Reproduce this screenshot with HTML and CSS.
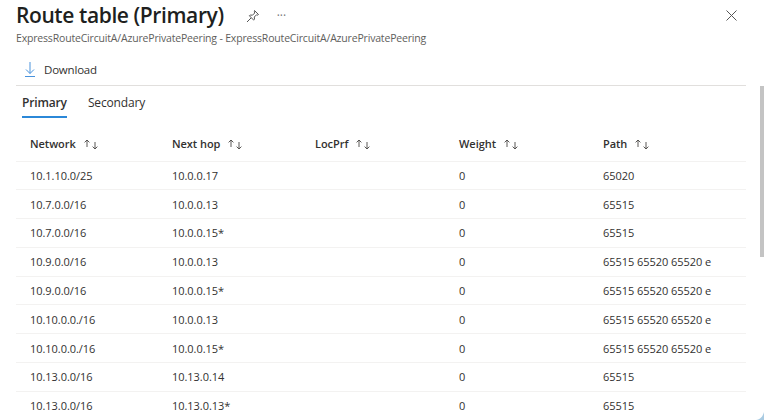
FILE: index.html
```html
<!DOCTYPE html>
<html lang="en">
<head>
<meta charset="utf-8">
<title>Route table (Primary)</title>
<link rel="stylesheet" href="styles.css">
</head>
<body>
<svg class="defs" width="0" height="0"><defs><g id="sort" fill="none" stroke="#484644" stroke-width=".9"><path d="M3 8V1M.6 3.400 3 1l2.400 2.400M11 3v7M8.600 7.600 11 10l2.400-2.400"/></g></defs></svg>
<div class="panel">
  <header class="head">
    <div class="title-row">
      <h1 class="title">Route table (Primary)</h1>
      <svg class="pin" width="14" height="14" viewBox="0 0 14 14" fill="none" stroke="#555" stroke-width="1"><path d="M1 13 5 9M8.500 1.500l4 4-.8.600-1.200-.3-2.200 2.200.2 2.300-.8.800L3.400 6.800l.8-.8 2.300.2 2.200-2.200-.3-1.200z"/></svg>
      <span class="more">···</span>
      <svg class="close" width="11" height="11" viewBox="0 0 11 11" stroke="#555" stroke-width="1"><path d="M.5.5l10 10M10.500.5l-10 10"/></svg>
    </div>
    <div class="subtitle">ExpressRouteCircuitA/AzurePrivatePeering - ExpressRouteCircuitA/AzurePrivatePeering</div>
  </header>
  <div class="toolbar">
    <svg class="dl" width="10" height="15" viewBox="0 0 10 15" fill="none" stroke="#4a93dc" stroke-width="1"><path d="M5 0v11.500M1 7.500l4 4 4-4M0 14.500h10"/></svg>
    <span>Download</span>
  </div>
  <nav class="tabs">
    <span class="tab active">Primary</span>
    <span class="tab">Secondary</span>
  </nav>
  <table class="routes">
    <thead>
      <tr>
        <th class="c1">Network<svg class="sort" width="14" height="11" viewBox="0 0 14 11"><use href="#sort"/></svg></th>
        <th class="c2">Next hop<svg class="sort" width="14" height="11" viewBox="0 0 14 11"><use href="#sort"/></svg></th>
        <th class="c3">LocPrf<svg class="sort" width="14" height="11" viewBox="0 0 14 11"><use href="#sort"/></svg></th>
        <th class="c4">Weight<svg class="sort" width="14" height="11" viewBox="0 0 14 11"><use href="#sort"/></svg></th>
        <th class="c5">Path<svg class="sort" width="14" height="11" viewBox="0 0 14 11"><use href="#sort"/></svg></th>
      </tr>
    </thead>
    <tbody>
      <tr><td>10.1.10.0/25</td><td>10.0.0.17</td><td></td><td>0</td><td>65020</td></tr>
      <tr><td>10.7.0.0/16</td><td>10.0.0.13</td><td></td><td>0</td><td>65515</td></tr>
      <tr><td>10.7.0.0/16</td><td>10.0.0.15*</td><td></td><td>0</td><td>65515</td></tr>
      <tr><td>10.9.0.0/16</td><td>10.0.0.13</td><td></td><td>0</td><td>65515 65520 65520 e</td></tr>
      <tr><td>10.9.0.0/16</td><td>10.0.0.15*</td><td></td><td>0</td><td>65515 65520 65520 e</td></tr>
      <tr><td>10.10.0.0./16</td><td>10.0.0.13</td><td></td><td>0</td><td>65515 65520 65520 e</td></tr>
      <tr><td>10.10.0.0./16</td><td>10.0.0.15*</td><td></td><td>0</td><td>65515 65520 65520 e</td></tr>
      <tr><td>10.13.0.0/16</td><td>10.13.0.14</td><td></td><td>0</td><td>65515</td></tr>
      <tr><td>10.13.0.0/16</td><td>10.13.0.13*</td><td></td><td>0</td><td>65515</td></tr>
    </tbody>
  </table>
  <div class="scrollbar"></div>
  <svg class="corner" width="8" height="8" viewBox="0 0 8 8"><path d="M8 0v8H0C4 7.500 7 4.500 8 0z" fill="#a9cbe2"/></svg>
</div>
</body>
</html>
```
FILE: styles.css
```css
html, body { margin: 0; padding: 0; height: 100%; overflow: hidden; background: #fff; }
body { font-family: "Open Sans", "Noto Sans", sans-serif; color: #323130; }
.defs { position: absolute; }
.panel { position: relative; width: 764px; height: 420px; overflow: hidden; padding-left: 16px; box-sizing: border-box; }
.head { height: 54px; }
.title-row { display: flex; align-items: center; height: 31px; }
.title { margin: 0; font-size: 21px; font-weight: 600; line-height: 31px; color: #201f1e; letter-spacing: -.4px; }
.pin { margin: 1px 0 0 22px; }
.more { margin-left: 17px; font-size: 12px; color: #777; }
.close { margin-left: auto; margin-right: 27px; }
.subtitle { font-size: 10.500px; line-height: 14px; color: #605e5c; letter-spacing: -.18px; }
.toolbar { display: flex; align-items: center; gap: 9px; height: 32px; width: 730px; padding-left: 9px; box-sizing: border-box; border-bottom: 1px solid #e1dfdd; font-size: 11.500px; letter-spacing: -.2px; }
.tabs { display: flex; gap: 21px; height: 32px; padding-left: 6px; font-size: 12px; letter-spacing: -.15px; }
.tab { line-height: 33px; height: 32px; box-sizing: border-box; }
.tab.active { font-weight: 600; border-bottom: 2px solid #2b88d8; }
.routes { margin-top: 9px; width: 730px; table-layout: fixed; border-collapse: collapse; font-size: 11px; letter-spacing: -.05px; }
.routes th { height: 34px; padding: 0 0 0 14px; font-weight: 600; text-align: left; border-bottom: 1px solid #f3f2f1; color: #323130; box-sizing: border-box; }
.routes td { height: 28.800px; padding: 0 0 0 14px; border-bottom: 1px solid #f3f2f1; box-sizing: border-box; }
.c1 { width: 142px; }
.c2 { width: 143px; }
.c3, .c4 { width: 144px; }
.sort { margin-left: 8px; vertical-align: -2px; }
.scrollbar { position: absolute; left: 760px; top: 86px; width: 4px; height: 171px; background: #c4c4c4; }
.corner { position: absolute; right: 0; bottom: 0; }
```
